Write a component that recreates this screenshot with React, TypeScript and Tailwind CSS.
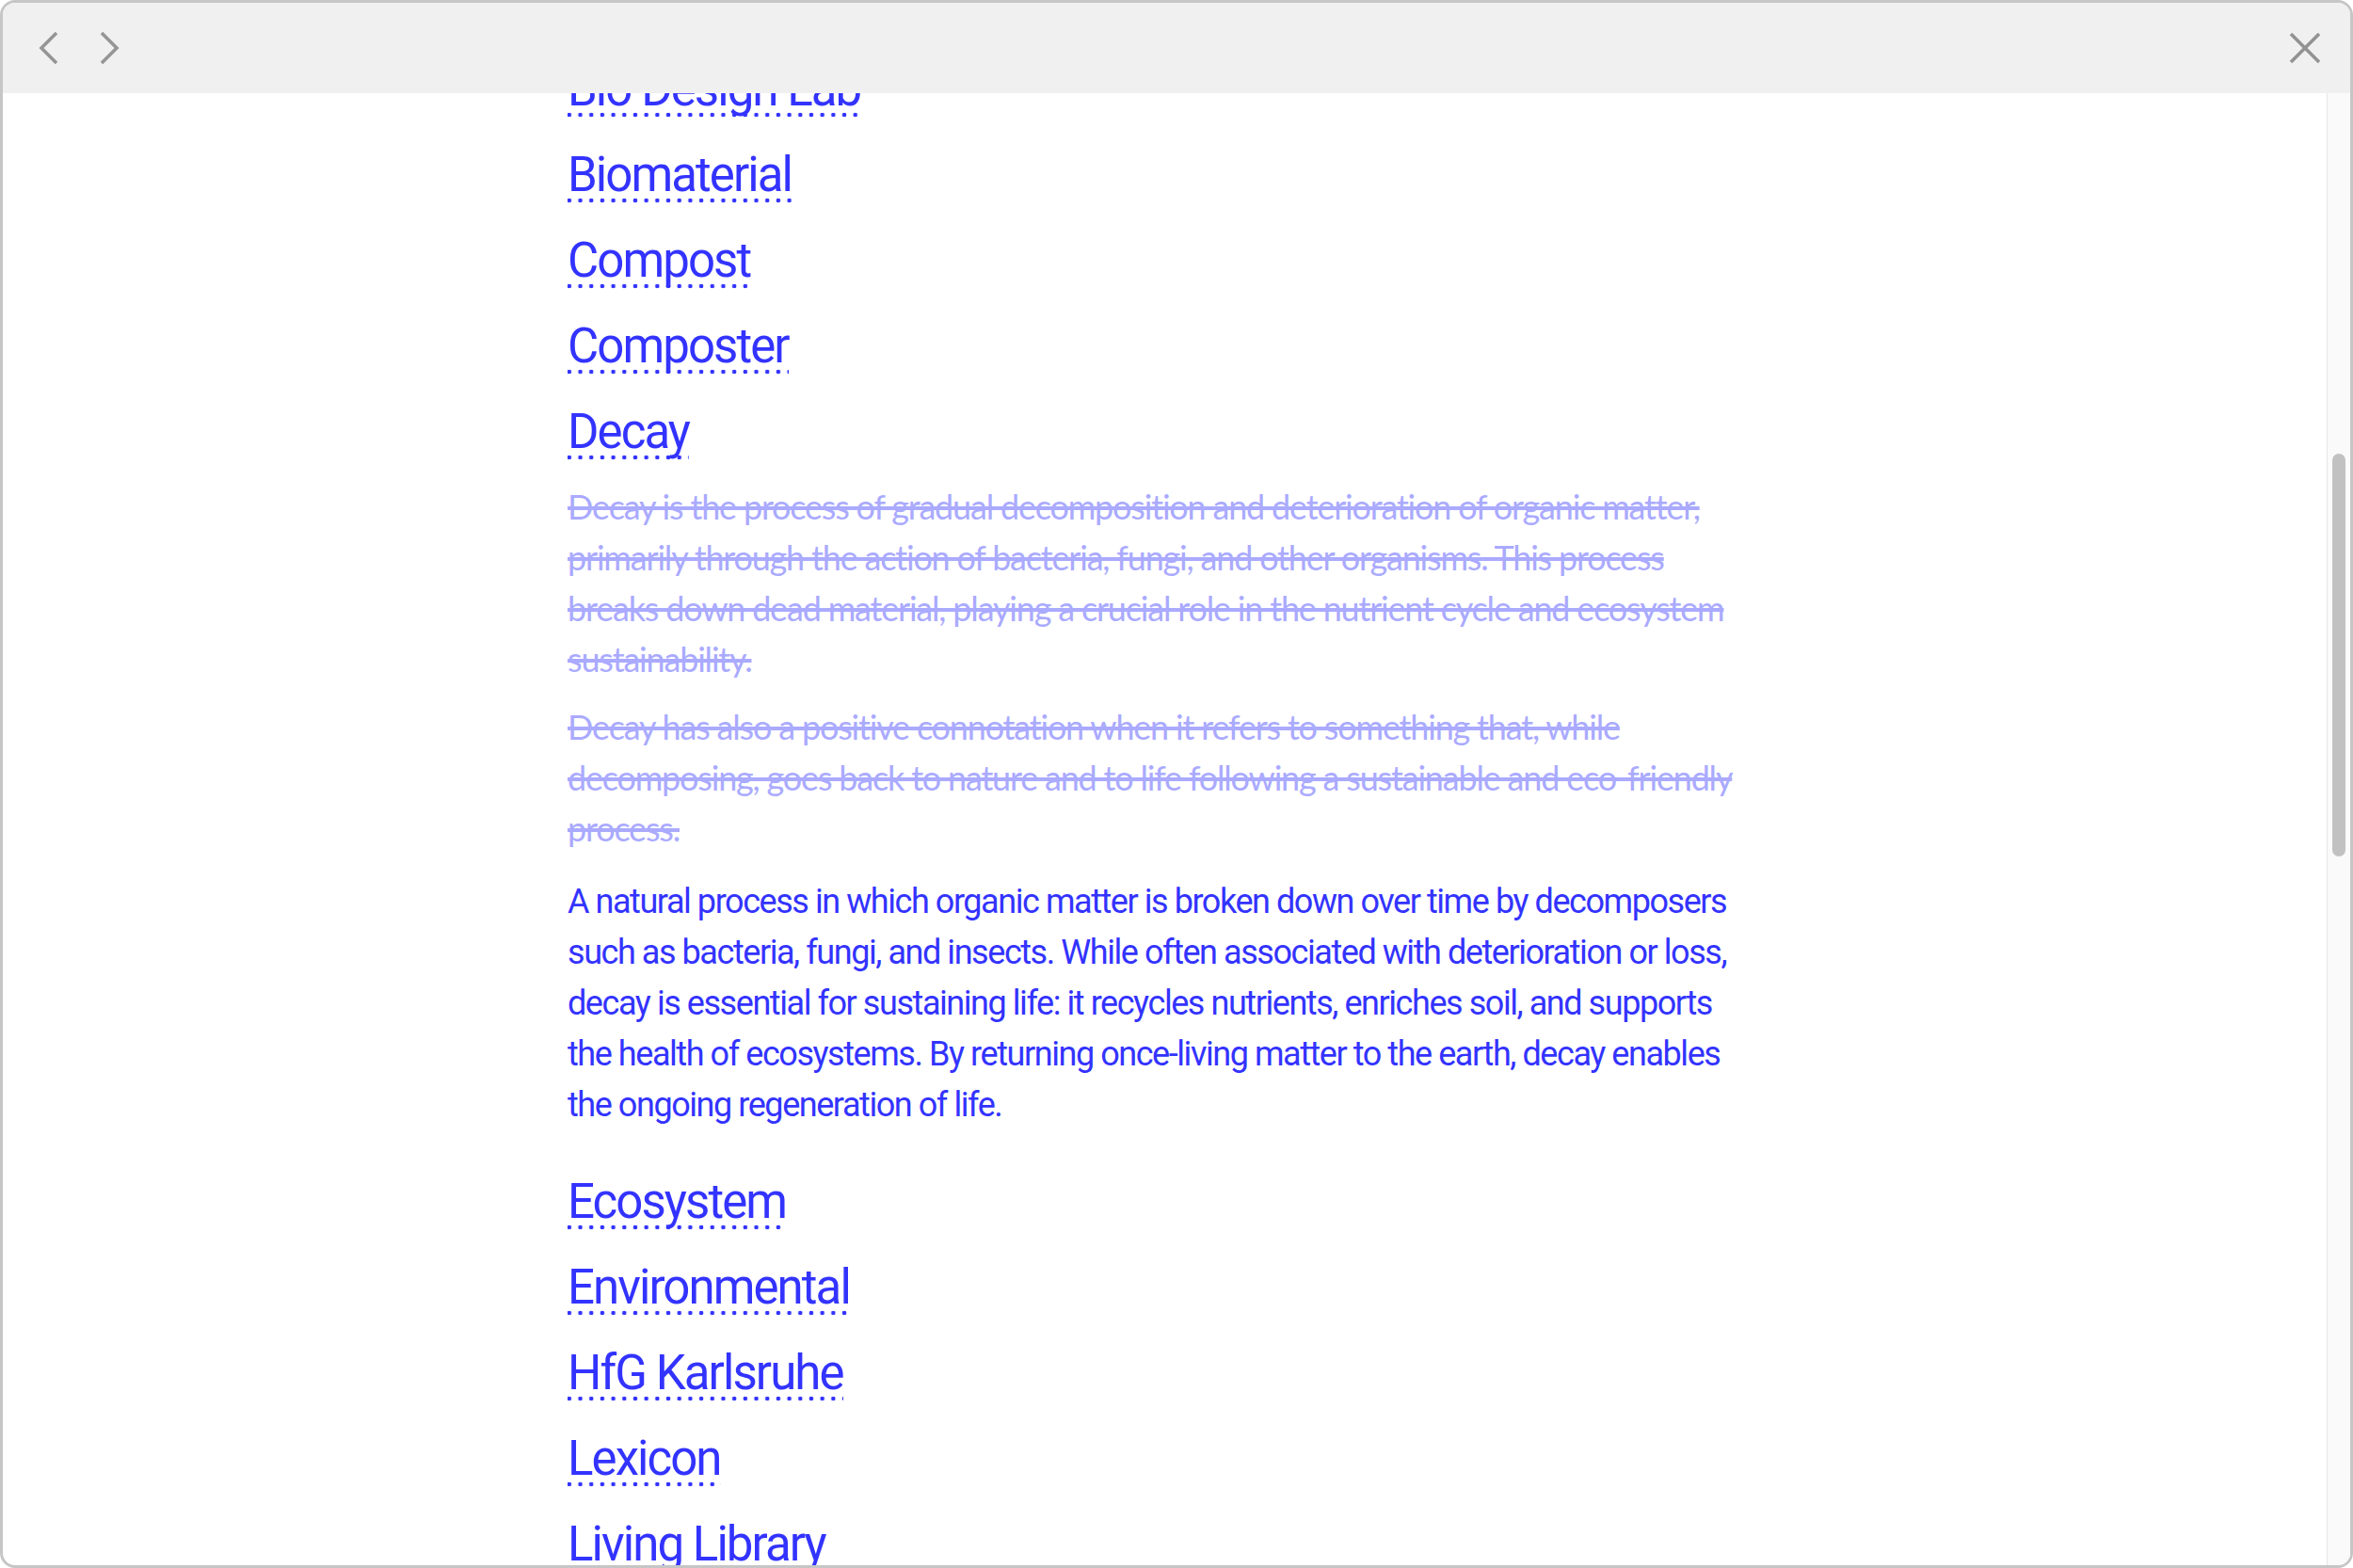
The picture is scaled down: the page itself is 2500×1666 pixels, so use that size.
import React from 'react';

const termsTop = ['Bio Design Lab', 'Biomaterial', 'Compost', 'Composter', 'Decay'];
const termsBottom = ['Ecosystem', 'Environmental', 'HfG Karlsruhe', 'Lexicon', 'Living Library'];

function Term({ label }: { label: string }) {
  return (
    <a
      href="#"
      className="block w-fit text-[51px] leading-[91px] tracking-[-0.038em] text-[#3333ff] bg-[radial-gradient(circle,#3333ff_2px,transparent_2.6px)] bg-[length:11.7px_6px] bg-repeat-x bg-[position:-4px_70px]"
    >
      {label}
    </a>
  );
}

function ChevronLeft() {
  return (
    <svg width="22" height="36" viewBox="0 0 22 36" fill="none">
      <path d="M19 2 L3 18 L19 34" stroke="#959595" strokeWidth="3.6" />
    </svg>
  );
}

function ChevronRight() {
  return (
    <svg width="22" height="36" viewBox="0 0 22 36" fill="none">
      <path d="M3 2 L19 18 L3 34" stroke="#959595" strokeWidth="3.6" />
    </svg>
  );
}

function CloseIcon() {
  return (
    <svg width="34" height="34" viewBox="0 0 34 34" fill="none">
      <path d="M2 2 L32 32 M32 2 L2 32" stroke="#929292" strokeWidth="3.6" />
    </svg>
  );
}

export default function App() {
  return (
    <div className="w-[2500px] h-[1666px] bg-white font-[Roboto,sans-serif]">
      <div className="w-full h-full flex flex-col border-[3px] border-[#c6c6c6] rounded-[16px] overflow-hidden">
        <header className="h-[96px] shrink-0 bg-[#f0f0f0] flex items-center justify-between pl-[38px] pr-[31px]">
          <div className="flex items-center gap-[42px]">
            <ChevronLeft />
            <ChevronRight />
          </div>
          <CloseIcon />
        </header>

        <div className="flex-1 flex min-h-0">
          <main className="flex-1 overflow-hidden pl-[600px]">
            <div className="-mt-[50px]">
              {termsTop.map((t) => (
                <Term key={t} label={t} />
              ))}

              <div className="mt-[7px] w-[1255px] font-[Lato,sans-serif] text-[36px] leading-[54px] text-[#aaaaff] line-through decoration-[4px] tracking-[-0.033em]">
                <p>
                  Decay is the process of gradual decomposition and deterioration of organic matter,
                  primarily through the action of bacteria, fungi, and other organisms. This process
                  breaks down dead material, playing a crucial role in the nutrient cycle and ecosystem
                  sustainability.
                </p>
                <p className="mt-[18px]">
                  Decay has also a positive connotation when it refers to something that, while
                  decomposing, goes back to nature and to life following a sustainable and eco-friendly
                  process.
                </p>
              </div>

              <p className="mt-[24px] w-[1260px] text-[36px] leading-[54px] tracking-[-0.04em] text-[#3333ff]">
                A natural process in which organic matter is broken down over time by decomposers
                such as bacteria, fungi, and insects. While often associated with deterioration or loss,
                decay is essential for sustaining life: it recycles nutrients, enriches soil, and supports
                the health of ecosystems. By returning once-living matter to the earth, decay enables
                the ongoing regeneration of life.
              </p>

              <div className="mt-[30px]">
                {termsBottom.map((t) => (
                  <Term key={t} label={t} />
                ))}
              </div>
            </div>
          </main>

          <aside className="w-[25px] shrink-0 border-l border-[#e6e6e6] bg-[#fafafa] pt-[383px]">
            <div className="mx-auto w-[14px] h-[428px] rounded-full bg-[#c1c1c1]" />
          </aside>
        </div>
      </div>
    </div>
  );
}
